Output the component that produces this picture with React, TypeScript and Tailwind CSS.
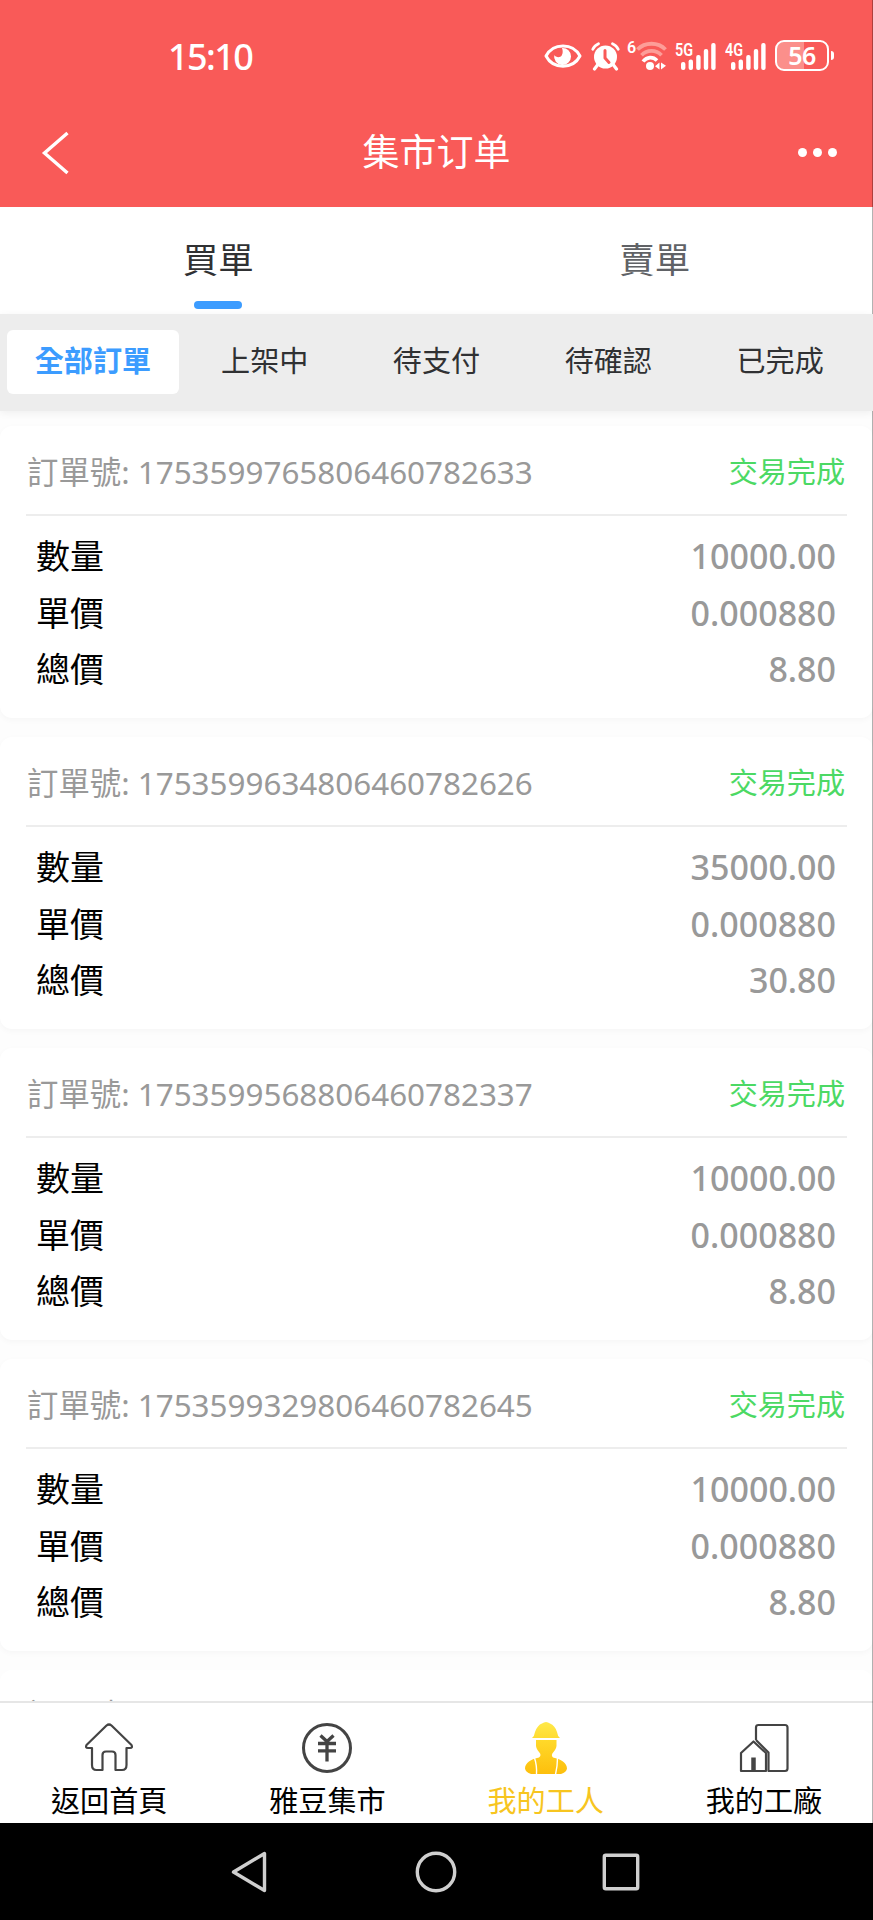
import React from 'react';

type Order = {
  id: string;
  amount: string;
  price: string;
  total: string;
};

type OrderCardProps = {
  order: Order;
};

type NavItem = {
  label: string;
  icon: React.ReactNode;
  active?: boolean;
};

const filters = ['全部訂單', '上架中', '待支付', '待確認', '已完成'];

const orders: Order[] = [
  { id: '1753599765806460782633', amount: '10000.00', price: '0.000880', total: '8.80' },
  { id: '1753599634806460782626', amount: '35000.00', price: '0.000880', total: '30.80' },
  { id: '1753599568806460782337', amount: '10000.00', price: '0.000880', total: '8.80' },
  { id: '1753599329806460782645', amount: '10000.00', price: '0.000880', total: '8.80' },
];

const EyeIcon = () => (
  <svg width="38" height="28" viewBox="0 0 38 28" fill="none">
    <path d="M2 14C9 0.5 29 0.5 36 14C29 27.5 9 27.5 2 14Z" stroke="#fff" strokeWidth="3" strokeLinejoin="round" />
    <path d="M18 6a8.500 8.500 0 1 1-7.800 7c1.500 2.500 6 3 7.500 0.500c1.300-2 1.300-5 0.300-7.500z" fill="#fff" />
  </svg>
);

const AlarmIcon = () => (
  <svg width="29" height="30" viewBox="0 0 29 30" fill="none">
    <circle cx="14.500" cy="16" r="11.500" fill="#fff" />
    <path d="M1.800 8.200C3 5.500 5 3.800 7.500 2.700M27.200 8.200C26 5.500 24 3.800 21.500 2.700" stroke="#fff" strokeWidth="2.800" strokeLinecap="round" />
    <path d="M6.500 24L3.500 28M22.500 24L25.500 28" stroke="#fff" strokeWidth="3.200" strokeLinecap="round" />
    <path d="M14 9.500V17L18 21.500" stroke="#f95a58" strokeWidth="3" strokeLinecap="round" />
  </svg>
);

const WifiIcon = () => (
  <svg width="31" height="30" viewBox="0 0 31 30" fill="none">
    <path d="M1.500 8.500C9 0.800 22 0.800 29.500 8.500" stroke="#fd9d98" strokeWidth="3.800" />
    <path d="M5.500 14.200C11 8.500 20 8.500 25.500 14.200" stroke="#fd9d98" strokeWidth="3.800" />
    <path d="M7 20.500C11 15.500 17 15.500 21 19.500" stroke="#fff" strokeWidth="3.600" />
    <circle cx="14" cy="25" r="4" fill="#fff" />
    <path d="M23.500 21.500V28.500L19 25.200ZM25 21.500V28.500L30 24.800Z" fill="#fff" />
  </svg>
);

const SignalIcon = ({ label }: { label: string }) => (
  <div className="relative h-[30px] w-[41px]">
    <span className="absolute left-0 top-0 origin-left scale-x-[0.76] font-[Roboto,sans-serif] text-[19px] font-semibold leading-[17px] text-white">
      {label}
    </span>
    <svg className="absolute bottom-0 right-0" width="36" height="30" viewBox="0 0 36 30">
      <g fill="#fff">
        <rect x="1" y="21" width="4.400" height="8" rx="2" />
        <rect x="8.600" y="18.500" width="4.400" height="10.500" rx="2" />
        <rect x="16.200" y="14" width="4.400" height="15" rx="2" />
        <rect x="23.800" y="8" width="4.400" height="21" rx="2" />
        <rect x="31.200" y="2" width="4.400" height="27" rx="2" />
      </g>
    </svg>
  </div>
);

const StatusBar = () => (
  <div className="flex h-28 items-start justify-between pl-[168px] pr-[39px] text-white">
    <span className="mt-[33px] text-[36px] font-medium leading-[48px] tracking-[-1.6px]">15:10</span>
    <div className="mt-10 flex h-[31px] items-center">
      <EyeIcon />
      <div className="ml-[9px]">
        <AlarmIcon />
      </div>
      <span className="ml-[7px] w-[9px] self-start font-[Roboto,sans-serif] text-[16px] font-semibold leading-[15px]">6</span>
      <WifiIcon />
      <div className="ml-2">
        <SignalIcon label="5G" />
      </div>
      <div className="ml-[9px]">
        <SignalIcon label="4G" />
      </div>
      <div className="ml-[9px] flex h-[31px] w-[54px] items-center justify-center rounded-[9px] border-[2.5px] border-white bg-[linear-gradient(90deg,#fb8f8b_54%,transparent_54%)] text-[25px] font-semibold leading-none tracking-[-0.5px]">
        56
      </div>
      <div className="ml-[2px] h-[9px] w-[3px] rounded-r-full bg-white" />
    </div>
  </div>
);

const TitleBar = () => (
  <div className="flex h-[95px] items-start justify-between pl-[41px] pr-[36px] text-white">
    <svg className="mt-[19px]" width="28" height="44" viewBox="0 0 28 44" fill="none">
      <path d="M26.500 2L3.500 22L26.500 42" stroke="#fff" strokeWidth="3.400" />
    </svg>
    <h1 className="ml-[6px] mt-[16px] font-['Noto_Sans','Noto_Sans_CJK_SC',sans-serif] text-[37px] leading-[48px]">
      集市订单
    </h1>
    <div className="mt-[36px] flex gap-[6px]">
      <i className="size-[9px] rounded-full bg-white" />
      <i className="size-[9px] rounded-full bg-white" />
      <i className="size-[9px] rounded-full bg-white" />
    </div>
  </div>
);

const OrderCard: React.FC<OrderCardProps> = ({ order }) => {
  const rows = [
    { label: '數量', value: order.amount },
    { label: '單價', value: order.price },
    { label: '總價', value: order.total },
  ];

  return (
    <div className="h-[292px] shrink-0 rounded-xl bg-white px-[26px] shadow-[0_2px_6px_rgba(0,0,0,0.03)]">
      <div className="flex h-[90px] items-center justify-between border-b-2 border-[#ededed] pl-px pr-[2px] pt-[3px]">
        <span className="text-[31.4px] text-[#999]">訂單號: {order.id}</span>
        <span className="pt-[3px] text-[29.1px] text-[#4cd964]">交易完成</span>
      </div>
      <div className="flex flex-col pl-[10px] pr-[11px] pt-[12.5px]">
        {rows.map((row) => (
          <div key={row.label} className="flex h-[56.5px] items-center justify-between text-[34px]">
            <span className="text-black">{row.label}</span>
            <span className="font-medium text-[#999]">{row.value}</span>
          </div>
        ))}
      </div>
    </div>
  );
};

const HomeIcon = () => (
  <svg width="50" height="52" viewBox="0 0 50 52" fill="none" stroke="#444" strokeWidth="2.200" strokeLinejoin="round">
    <path d="M22.500 3.500Q25 1.500 27.500 3.500L47.500 23Q49 26 46 26H42.500V43Q42.500 48 38 48H31.500V33Q31.500 29.500 28 29.500H22Q18.500 29.500 18.500 33V48H12.500Q8 48 8 43V26H4Q1 26 2.500 23Z" />
  </svg>
);

const MarketIcon = () => (
  <svg width="52" height="52" viewBox="0 0 52 52" fill="none" stroke="#444">
    <circle cx="26" cy="26" r="23.500" strokeWidth="3" />
    <path d="M19.500 13.500L26 19.500L32.500 13.500M17 21.500H35M17 28.800H35M26 19.500V39.500" strokeWidth="3.300" />
  </svg>
);

const WorkerIcon = () => (
  <svg width="44" height="54" viewBox="0 0 44 54">
    <defs>
      <linearGradient id="worker" x1="0" y1="0" x2="0" y2="1">
        <stop offset="0" stopColor="#ffd92a" />
        <stop offset="1" stopColor="#fdbf0d" />
      </linearGradient>
      <linearGradient id="helmet" x1="0" y1="0" x2="0" y2="1">
        <stop offset="0" stopColor="#ffe94a" />
        <stop offset="1" stopColor="#ffdc32" />
      </linearGradient>
    </defs>
    <path d="M8 17Q10.500 15 11 11Q13.500 4 18 2.500Q22 -0.500 26 2.500Q31 4.500 33 11Q33.500 15 36 17Z" fill="url(#helmet)" />
    <path
      d="M12 19H32.500V23Q33 27 29.500 31Q26.500 34 29 36.500C37 38 43 42 43 47.500Q42.500 51 37 53H7Q1.500 51 1 47.500C1 42 7 38 15 36.500Q18 34 15 31Q11.500 27 12 23Z"
      fill="url(#worker)"
    />
    <path d="M10.500 37Q13 44 12.500 53.500M33.500 37Q33.500 45 31.500 53.500" stroke="#fff" strokeWidth="1.400" fill="none" />
  </svg>
);

const FactoryIcon = () => (
  <svg width="50" height="50" viewBox="0 0 50 50" fill="none" stroke="#444" strokeWidth="2.200" strokeLinejoin="round">
    <path d="M17 17V4.500Q17 2 19.500 2H46Q48.500 2 48.500 4.500V45.500Q48.500 48 46 48H29.500V29.500L17 17" />
    <path d="M2 48V30L14.500 18.500L27 30V48Z" />
    <path d="M14.500 47V34.500" strokeWidth="4.500" />
  </svg>
);

const navItems: NavItem[] = [
  { label: '返回首頁', icon: <HomeIcon /> },
  { label: '雅豆集市', icon: <MarketIcon /> },
  { label: '我的工人', icon: <WorkerIcon />, active: true },
  { label: '我的工廠', icon: <FactoryIcon /> },
];

const BottomNav = () => (
  <div className="grid h-[122px] grid-cols-4 border-t-2 border-[#e6e6e6] bg-white">
    {navItems.map((item) => (
      <div key={item.label} className="flex flex-col items-center pt-[17px]">
        <div className="flex h-[56px] items-center">{item.icon}</div>
        <span className={`mt-[2px] text-[29.1px] leading-[46px] ${item.active ? 'text-[#f7c520]' : 'text-black'}`}>
          {item.label}
        </span>
      </div>
    ))}
  </div>
);

const SystemNav = () => (
  <div className="flex h-[97px] items-center justify-center bg-black pr-[3px]">
    <svg width="38" height="42" viewBox="0 0 38 42" fill="none" stroke="#cfcfcf" strokeWidth="3.400" strokeLinejoin="round">
      <path d="M34.500 2.500V39.500L3.500 21Z" />
    </svg>
    <svg className="ml-[147px] mr-[145px]" width="42" height="42" viewBox="0 0 42 42" fill="none" stroke="#cfcfcf" strokeWidth="3.400">
      <circle cx="21" cy="21" r="18.700" />
    </svg>
    <svg width="38" height="38" viewBox="0 0 38 38" fill="none" stroke="#cfcfcf" strokeWidth="3.400">
      <rect x="2.300" y="2.300" width="33.400" height="33.400" rx="1.500" />
    </svg>
  </div>
);

export default function App() {
  return (
    <div className="relative flex h-[1920px] w-[873px] flex-col overflow-hidden bg-[#fdfdfd] font-['Noto_Sans','Noto_Sans_CJK_TC',sans-serif]">
      <header className="h-[207px] bg-[#f95a58]">
        <StatusBar />
        <TitleBar />
      </header>

      <div className="grid h-[107px] grid-cols-2 bg-white text-[35.5px]">
        <div className="flex flex-col items-center pt-[28px] text-[#303133]">
          <span className="leading-[48px]">買單</span>
          <i className="mt-[18px] h-[8px] w-[48px] rounded-full bg-[#3c9cff]" />
        </div>
        <div className="flex flex-col items-center pt-[28px] text-[#606266]">
          <span className="leading-[48px]">賣單</span>
        </div>
      </div>

      <div className="z-10 grid h-[97px] grid-cols-5 bg-[#ededed] px-[7px] pt-4 shadow-[0_2px_8px_rgba(0,0,0,0.06)]">
        {filters.map((name, i) => (
          <div
            key={name}
            className={`flex h-16 items-center justify-center rounded-md text-[29.1px] ${
              i === 0 ? 'bg-white font-bold text-[#3c9cff]' : 'text-[#303133]'
            }`}
          >
            {name}
          </div>
        ))}
      </div>

      <main className="flex h-[1290px] flex-col gap-[19px] overflow-hidden pt-[15px]">
        {orders.map((order) => (
          <OrderCard key={order.id} order={order} />
        ))}
        {/* next card, only its top edge is above the nav */}
        <div className="h-[90px] shrink-0 rounded-t-xl bg-white px-[27px] pt-[21px]">
          <span className="text-[31.4px] text-[#999]">訂單號:</span>
        </div>
      </main>

      <BottomNav />
      <SystemNav />
      <div className="absolute right-0 top-0 h-[1823px] w-px bg-black/30" />
    </div>
  );
}
